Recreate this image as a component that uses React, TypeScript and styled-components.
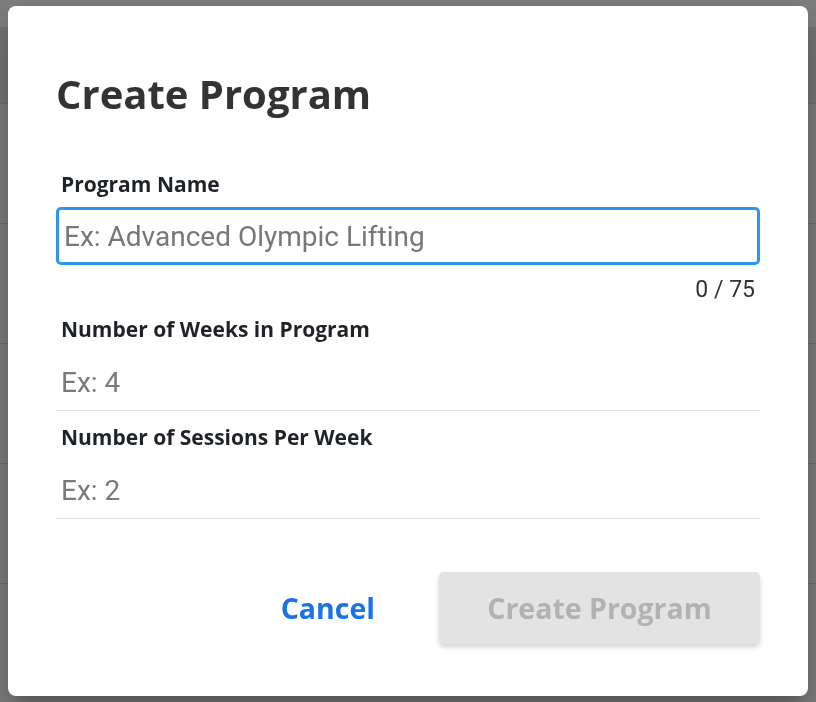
import React, { useState } from "react";
import styled, { createGlobalStyle } from "styled-components";

const GlobalStyle = createGlobalStyle`
  html, body {
    margin: 0;
    padding: 0;
    background: #ffffff;
  }
  * {
    box-sizing: border-box;
  }
`;

/* page behind the dialog */
const Page = styled.div`
  padding-top: 27px;
  min-height: 702px;
`;

const PageHeader = styled.div`
  height: 76px;
  background: #ececec;
`;

const PageRow = styled.div`
  height: 120px;
  border-top: 1px solid #dcdcdc;
`;

const Overlay = styled.div`
  position: fixed;
  inset: 0;
  background: rgba(0, 0, 0, 0.5);
  display: flex;
  justify-content: center;
  align-items: flex-start;
  padding-top: 6px;
`;

const Dialog = styled.div`
  width: 800px;
  background: #ffffff;
  border-radius: 8px;
  padding: 60px 48px 52px;
  display: flex;
  flex-direction: column;
  box-shadow: 0 11px 15px -7px rgba(0, 0, 0, 0.2),
    0 24px 38px 3px rgba(0, 0, 0, 0.14), 0 9px 46px 8px rgba(0, 0, 0, 0.12);
`;

const Title = styled.h1`
  margin: 0;
  font-family: "Open Sans", sans-serif;
  font-weight: 700;
  font-size: 40px;
  line-height: 55px;
  color: #333333;
`;

const Label = styled.label<{ $gap: number }>`
  display: block;
  margin-top: ${({ $gap }) => $gap}px;
  padding-left: 5px;
  font-family: "Open Sans", sans-serif;
  font-weight: 700;
  font-size: 21px;
  line-height: 28px;
  color: #1f2328;
`;

const OutlinedInput = styled.input`
  display: block;
  width: 100%;
  height: 58px;
  margin-top: 9px;
  padding: 0 5px;
  border: 3px solid #2d96ec;
  border-radius: 5px;
  outline: none;
  font-family: Roboto, sans-serif;
  font-size: 28px;
  color: #333333;
  caret-color: #222222;

  &::placeholder {
    color: #777777;
  }
`;

const Counter = styled.div`
  margin-top: 11px;
  padding-right: 5px;
  text-align: right;
  font-family: Roboto, sans-serif;
  font-size: 23px;
  line-height: 28px;
  color: #333333;
`;

const LineInput = styled.input`
  display: block;
  width: 100%;
  height: 57px;
  margin-top: 11px;
  padding: 0 5px;
  border: none;
  border-bottom: 1px solid #dddddd;
  outline: none;
  font-family: Roboto, sans-serif;
  font-size: 28px;
  color: #333333;

  &::placeholder {
    color: #7a7a7a;
  }
`;

const Actions = styled.div`
  margin-top: 53px;
  display: flex;
  justify-content: flex-end;
  align-items: center;
  gap: 40px;
`;

const TextButton = styled.button`
  border: none;
  background: transparent;
  padding: 0 24px;
  height: 72px;
  font-family: "Open Sans", sans-serif;
  font-weight: 700;
  font-size: 28.5px;
  color: #1a73e8;
  cursor: pointer;
`;

const SolidButton = styled.button`
  width: 321px;
  height: 72px;
  border: none;
  border-radius: 5px;
  background: #e4e3e4;
  box-shadow: 0 3px 5px rgba(0, 0, 0, 0.18);
  font-family: "Open Sans", sans-serif;
  font-weight: 700;
  font-size: 28.5px;
  color: #b2b2b2;
`;

const App: React.FC = () => {
  const [name, setName] = useState("");
  const [weeks, setWeeks] = useState("");
  const [sessions, setSessions] = useState("");

  return (
    <>
      <GlobalStyle />
      <Page>
        <PageHeader />
        {[0, 1, 2, 3, 4].map((i) => (
          <PageRow key={i} />
        ))}
      </Page>
      <Overlay>
        <Dialog>
          <Title>Create Program</Title>
          <Label $gap={49}>Program Name</Label>
          <OutlinedInput
            autoFocus
            maxLength={75}
            value={name}
            onChange={(e) => setName(e.target.value)}
            placeholder="Ex: Advanced Olympic Lifting"
          />
          <Counter>{name.length} / 75</Counter>
          <Label $gap={11}>Number of Weeks in Program</Label>
          <LineInput
            value={weeks}
            onChange={(e) => setWeeks(e.target.value)}
            placeholder="Ex: 4"
          />
          <Label $gap={12}>Number of Sessions Per Week</Label>
          <LineInput
            value={sessions}
            onChange={(e) => setSessions(e.target.value)}
            placeholder="Ex: 2"
          />
          <Actions>
            <TextButton>Cancel</TextButton>
            <SolidButton disabled>Create Program</SolidButton>
          </Actions>
        </Dialog>
      </Overlay>
    </>
  );
};

export default App;
